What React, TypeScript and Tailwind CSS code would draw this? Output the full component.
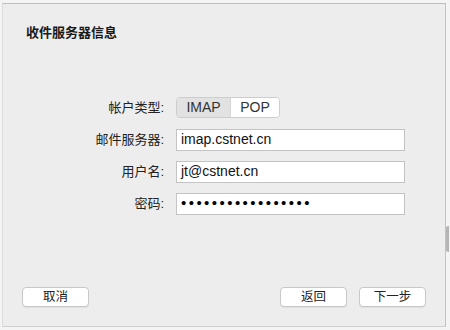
import React from 'react';

const fontStack = '"Liberation Sans", "Noto Sans CJK SC", sans-serif';

function Field({ label, children }: { label: string; children: React.ReactNode }) {
  return (
    <div className="flex items-center h-[32px]">
      <div className="w-[163px] text-right text-[13px] text-[#222]">{label}</div>
      <div className="ml-[12px]">{children}</div>
    </div>
  );
}

function TextBox({ value }: { value: string }) {
  return (
    <div className="w-[229px] h-[22px] bg-white border border-[#c4c4c4] flex items-center pl-[4px] text-[14px] text-[#111]">
      {value}
    </div>
  );
}

function Button({ label }: { label: string }) {
  return (
    <button className="w-[67px] h-[20px] bg-white border border-[#c8c8c8] rounded-[4px] shadow-[0_1px_0_rgba(0,0,0,0.06)] text-[12.5px] text-[#222] leading-none">
      {label}
    </button>
  );
}

export default function App() {
  return (
    <div className="w-[450px] h-[330px] bg-[#f4f4f4] overflow-hidden" style={{ fontFamily: fontStack }}>
      <div className="relative ml-[2px] mt-[3px] w-[444px] h-[324px] bg-[#ededed] border-t border-t-[#bdbdbd] border-l border-l-[#dcdcdc] border-r border-r-[#c2c2c2] border-b border-b-[#cfcfcf] flex flex-col">
        <div className="pl-[23px] pt-[19px] text-[13px] font-bold text-[#1a1a1a]">收件服务器信息</div>

        <div className="mt-[49px] -ml-[2px] flex flex-col">
          <Field label="帐户类型:">
            <div className="flex h-[21px] w-[104px] rounded-[4px] border border-[#cdcdcd] overflow-hidden text-[14px] text-[#333]">
              <div className="w-[54px] bg-[#e2e2e2] flex items-center justify-center border-r border-[#d6d6d6]">IMAP</div>
              <div className="flex-1 bg-white flex items-center justify-center">POP</div>
            </div>
          </Field>
          <Field label="邮件服务器:">
            <TextBox value="imap.cstnet.cn" />
          </Field>
          <Field label="用户名:">
            <TextBox value="jt@cstnet.cn" />
          </Field>
          <Field label="密码:">
            <div className="w-[229px] h-[22px] bg-white border border-[#c4c4c4] flex items-center pl-[4px] text-[15px] tracking-[2.45px] text-black">
              {'•'.repeat(17)}
            </div>
          </Field>
        </div>

        <div className="mt-auto mb-[19px] flex items-center pl-[19px] pr-[19px]">
          <Button label="取消" />
          <div className="flex-1" />
          <Button label="返回" />
          <div className="w-[12px]" />
          <Button label="下一步" />
        </div>

        <div className="absolute right-[-4px] top-[222px] w-[3px] h-[26px] bg-[#b5b5b5] rounded-l-[2px]" />
      </div>
    </div>
  );
}
